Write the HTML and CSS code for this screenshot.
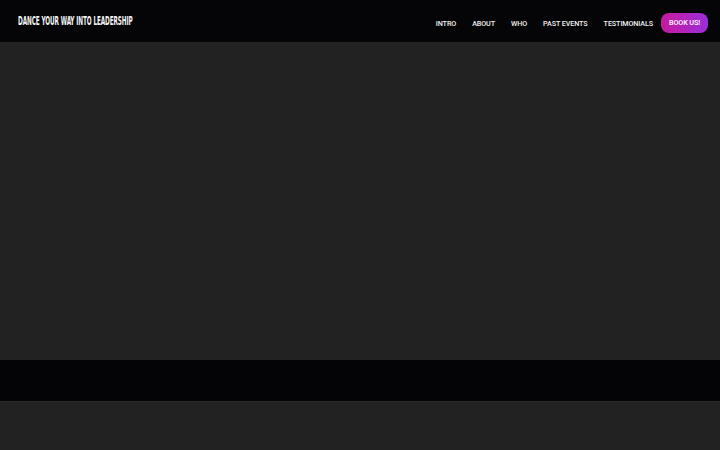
FILE: index.html
```html
<!DOCTYPE html>
<html lang="en">
<head>
<meta charset="utf-8">
<title>Dance Your Way Into Leadership</title>
<link rel="stylesheet" href="styles.css">
</head>
<body>
<header class="site-header">
  <div class="brand">DANCE YOUR WAY INTO LEADERSHIP</div>
  <nav class="nav">
    <a class="nav-link" href="#intro">INTRO</a>
    <a class="nav-link" href="#about">ABOUT</a>
    <a class="nav-link" href="#who">WHO</a>
    <a class="nav-link" href="#past">PAST EVENTS</a>
    <a class="nav-link" href="#testimonials">TESTIMONIALS</a>
    <a class="nav-btn" href="#book">BOOK US!</a>
  </nav>
</header>
<main>
  <section class="hero" id="intro"></section>
  <section class="band"></section>
  <section class="rest"></section>
</main>
</body>
</html>
```
FILE: styles.css
```css
* { box-sizing: border-box; }
html, body { margin: 0; padding: 0; }
body {
  background: #222222;
  font-family: Roboto, "Liberation Sans", sans-serif;
  color: #fff;
}
.site-header {
  height: 42px;
  background: #050508;
  display: flex;
  align-items: center;
  justify-content: space-between;
  padding: 0 12px 0 18px;
}
.brand {
  font-family: "DejaVu Sans Condensed", "DejaVu Sans", sans-serif;
  font-weight: bold;
  font-size: 12px;
  letter-spacing: -0.2px;
  color: #f2f2f2;
  white-space: nowrap;
  transform: scaleX(0.53);
  transform-origin: left center;
  margin-top: -1px;
}
.nav {
  display: flex;
  align-items: center;
  gap: 16px;
  margin-top: 4px;
}
.nav-link {
  color: #f2f2f2;
  text-decoration: none;
  font-size: 7.2px;
  font-weight: 500;
  letter-spacing: -0.1px;
}
.nav-btn {
  color: #fff;
  text-decoration: none;
  font-size: 7.2px;
  font-weight: 500;
  letter-spacing: -0.1px;
  height: 20px;
  line-height: 20px;
  padding: 0 8px;
  border-radius: 8px;
  margin-left: -8px;
  background: linear-gradient(90deg, #c8199f, #9a2fd8);
}
.hero { height: 318px; background: #222222; }
.band { height: 42px; background: #040407; border-bottom: 1px solid #2a2a2a; }
.rest { height: 48px; background: #222222; }
```
